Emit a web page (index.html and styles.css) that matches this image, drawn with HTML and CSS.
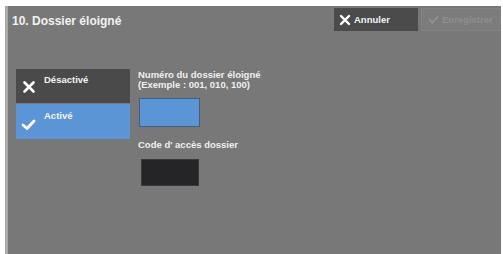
FILE: index.html
```html
<!DOCTYPE html>
<html lang="fr">
<head>
<meta charset="utf-8">
<link rel="stylesheet" href="styles.css">
</head>
<body>
<div class="panel">
  <div class="header">
    <div class="title">10. Dossier éloigné</div>
    <div class="actions">
      <div class="btn cancel">
        <svg width="12" height="12" viewBox="0 0 12 12"><path d="M2 2 L10 10 M10 2 L2 10" stroke="#fff" stroke-width="2.4" stroke-linecap="round"/></svg>
        <span>Annuler</span>
      </div>
      <div class="btn save">
        <svg width="11" height="10" viewBox="0 0 11 10"><path d="M1.5 5 L4.2 7.8 L9.5 2" stroke="#939393" stroke-width="1.8" fill="none" stroke-linecap="round"/></svg>
        <span>Enregistrer</span>
      </div>
    </div>
  </div>
  <div class="content">
    <div class="options">
      <div class="opt off">
        <svg class="ico" width="14" height="14" viewBox="0 0 14 14"><path d="M2.5 2.5 L11.5 11.5 M11.5 2.5 L2.5 11.5" stroke="#fff" stroke-width="2.6" stroke-linecap="round"/></svg>
        <span>Désactivé</span>
      </div>
      <div class="opt on">
        <svg class="ico" width="15" height="13" viewBox="0 0 15 13"><path d="M2 7 L6 10.5 L13 3" stroke="#fff" stroke-width="2.8" fill="none" stroke-linecap="round" stroke-linejoin="round"/></svg>
        <span>Activé</span>
      </div>
    </div>
    <div class="fields">
      <div class="label">Numéro du dossier éloigné<br>(Exemple : 001, 010, 100)</div>
      <div class="input blue"></div>
      <div class="label code">Code d' accès dossier</div>
      <div class="input dark"></div>
    </div>
  </div>
</div>
</body>
</html>
```
FILE: styles.css
```css
html, body {
  margin: 0;
  padding: 0;
  background: #ffffff;
}
body {
  width: 503px;
  height: 254px;
  overflow: hidden;
  font-family: "Liberation Sans", Arial, sans-serif;
  padding-top: 6px;
  box-sizing: border-box;
}
.panel {
  margin-left: 5px;
  width: 496px;
  height: 248px;
  background: #787878;
  border-left: 3px solid #a9a9a9;
  box-sizing: border-box;
}
.header {
  display: flex;
  justify-content: space-between;
  align-items: flex-start;
  padding: 2px 0 0 4px;
  height: 30px;
  box-sizing: border-box;
}
.title {
  color: #f2f2f2;
  font-weight: bold;
  font-size: 12px;
  padding-top: 6px;
}
.actions {
  display: flex;
  gap: 3px;
}
.btn {
  height: 23px;
  display: flex;
  align-items: center;
  gap: 3px;
  font-size: 9.5px;
  font-weight: bold;
  box-sizing: border-box;
}
.cancel {
  width: 84px;
  background: #4b4b4b;
  color: #f4f4f4;
  padding-left: 5px;
}
.save {
  width: 80px;
  background: #7c7c7c;
  color: #8e8e8e;
  padding-left: 6px;
  border: 1px solid #828282;
}
.content {
  display: flex;
  gap: 8px;
  padding: 33px 0 0 8px;
}
.options {
  display: flex;
  flex-direction: column;
  gap: 1px;
  width: 114px;
}
.opt {
  height: 34px;
  display: flex;
  align-items: flex-start;
  color: #f4f4f4;
  font-size: 9.5px;
  font-weight: bold;
  box-sizing: border-box;
  padding: 5px 0 0 6px;
}
.opt span {
  margin-left: 8px;
}
.opt .ico {
  margin-top: 6px;
}
.off {
  background: #4a4a4a;
}
.on {
  height: 35px;
  background: #5b95d6;
  padding-left: 5px;
  padding-top: 6px;
}
.on .ico {
  margin-top: 8px;
}
.fields {
  display: flex;
  flex-direction: column;
  align-items: flex-start;
}
.label {
  color: #f0f0f0;
  font-size: 9.5px;
  font-weight: bold;
  line-height: 10px;
  margin-top: 1px;
}
.input {
  width: 61px;
  height: 29px;
  box-sizing: border-box;
}
.blue {
  margin-top: 8px;
  margin-left: 1px;
  background: #5b95d6;
  border: 1px solid #3e5e86;
}
.code {
  margin-top: 13px;
}
.dark {
  margin-top: 9px;
  margin-left: 3px;
  width: 58px;
  height: 27px;
  background: #252528;
  border: 1px solid #3a3a3a;
}
```
